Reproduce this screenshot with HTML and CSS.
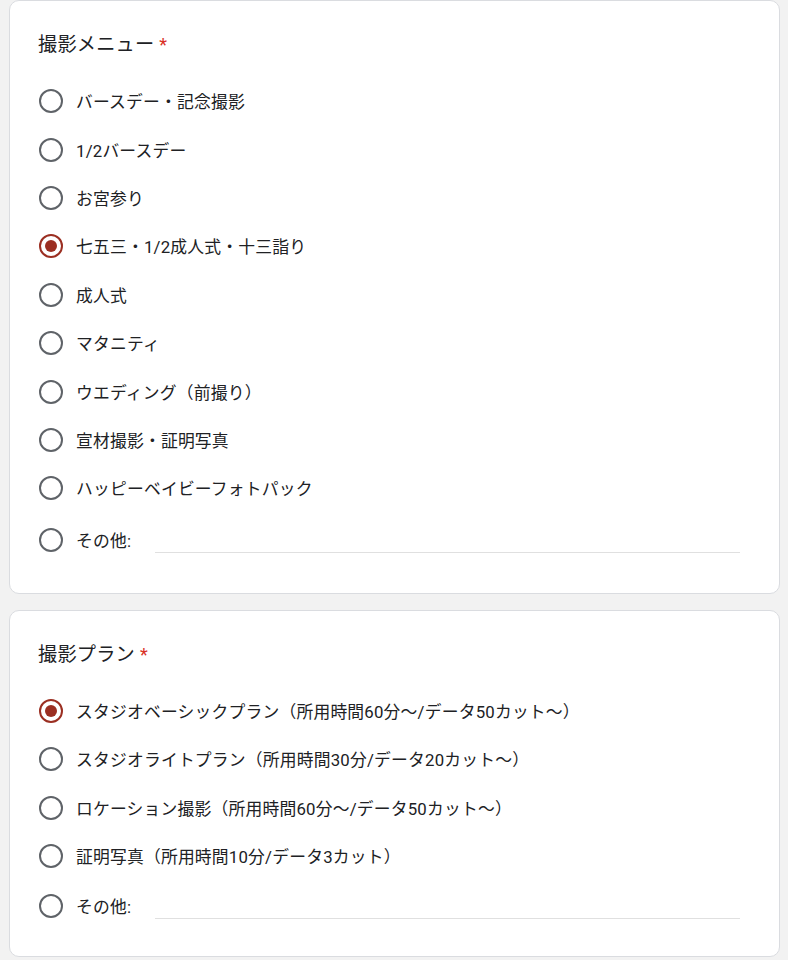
FILE: index.html
```html
<!DOCTYPE html>
<html lang="ja">
<head>
<meta charset="utf-8">
<link rel="stylesheet" href="styles.css">
</head>
<body>
<div class="page">
  <section class="card card-menu">
    <div class="q-title">撮影メニュー<span class="req">*</span></div>
    <div class="options">
      <div class="opt"><span class="radio"></span><span class="label">バースデー・記念撮影</span></div>
      <div class="opt"><span class="radio"></span><span class="label">1/2バースデー</span></div>
      <div class="opt"><span class="radio"></span><span class="label">お宮参り</span></div>
      <div class="opt"><span class="radio checked"></span><span class="label">七五三・1/2成人式・十三詣り</span></div>
      <div class="opt"><span class="radio"></span><span class="label">成人式</span></div>
      <div class="opt"><span class="radio"></span><span class="label">マタニティ</span></div>
      <div class="opt"><span class="radio"></span><span class="label">ウエディング（前撮り）</span></div>
      <div class="opt"><span class="radio"></span><span class="label">宣材撮影・証明写真</span></div>
      <div class="opt"><span class="radio"></span><span class="label">ハッピーベイビーフォトパック</span></div>
      <div class="opt other"><span class="radio"></span><span class="label">その他:</span><span class="other-input"></span></div>
    </div>
  </section>
  <section class="card card-plan">
    <div class="q-title">撮影プラン<span class="req">*</span></div>
    <div class="options">
      <div class="opt"><span class="radio checked"></span><span class="label">スタジオベーシックプラン（所用時間60分〜/データ50カット〜）</span></div>
      <div class="opt"><span class="radio"></span><span class="label">スタジオライトプラン（所用時間30分/データ20カット〜）</span></div>
      <div class="opt"><span class="radio"></span><span class="label">ロケーション撮影（所用時間60分〜/データ50カット〜）</span></div>
      <div class="opt"><span class="radio"></span><span class="label">証明写真（所用時間10分/データ3カット）</span></div>
      <div class="opt other other-tight"><span class="radio"></span><span class="label">その他:</span><span class="other-input"></span></div>
    </div>
  </section>
</div>
</body>
</html>
```
FILE: styles.css
```css
html, body {
  margin: 0;
  padding: 0;
  background: #f2f2f2;
}
body {
  font-family: Roboto, "Noto Sans CJK JP", sans-serif;
  color: #202124;
}
.page {
  padding: 0 8px 0 9px;
  display: flex;
  flex-direction: column;
  gap: 16px;
}
.card {
  background: #ffffff;
  border: 1px solid #dadce0;
  border-radius: 10px;
  padding: 30px 29px 25px 28px;
}
.card-menu {
  padding-bottom: 28px;
}
.q-title {
  font-size: 19.2px;
  line-height: 28px;
  letter-spacing: 0.2px;
}
.req {
  color: #d93025;
  margin-left: 5px;
  font-size: 18px;
}
.options {
  margin-top: 18px;
  display: flex;
  flex-direction: column;
}
.opt {
  display: flex;
  align-items: center;
  height: 48.4px;
}
.opt.other {
  height: 52.4px;
  padding-top: 2px;
  box-sizing: border-box;
}
.opt.other-tight {
  height: 50.4px;
  padding-top: 0;
}
.radio {
  width: 24px;
  height: 24px;
  margin-left: 1px;
  box-sizing: border-box;
  border: 2.4px solid #5f6368;
  border-radius: 50%;
  flex: 0 0 auto;
  position: relative;
}
.radio.checked {
  border-color: #9b2f22;
}
.radio.checked::after {
  content: "";
  position: absolute;
  left: 3.6px;
  top: 3.6px;
  width: 12px;
  height: 12px;
  border-radius: 50%;
  background: #9b2f22;
}
.label {
  margin-left: 13px;
  font-size: 16.8px;
  letter-spacing: 0.2px;
  white-space: nowrap;
}
.other-input {
  flex: 1;
  margin-left: 24px;
  margin-right: 10px;
  align-self: flex-end;
  margin-bottom: 12px;
  border-bottom: 1px solid #e0e0e0;
  height: 1px;
}
```
